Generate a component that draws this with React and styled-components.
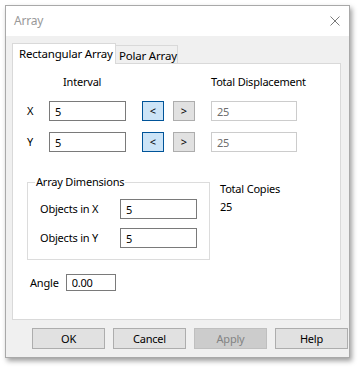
import React from "react";
import styled, { createGlobalStyle } from "styled-components";

const Global = createGlobalStyle`
  html, body { margin: 0; padding: 0; background: #ffffff; }
  body {
    font-family: "Noto Sans", sans-serif;
    font-size: 11px;
    letter-spacing: -0.2px;
    color: #000;
  }
  * { box-sizing: border-box; }
`;

const Page = styled.div`
  padding: 5px;
  width: 361px;
  height: 369px;
`;

const Window = styled.div`
  width: 345px;
  height: 353px;
  border: 1px solid #a9a9a9;
  background: #f0f0f0;
  box-shadow: 2px 3px 5px rgba(0, 0, 0, 0.38);
  display: flex;
  flex-direction: column;
`;

const TitleBar = styled.div`
  height: 30px;
  background: #ffffff;
  display: flex;
  align-items: center;
  justify-content: space-between;
  padding: 0 9px 0 8px;
`;

const Title = styled.span`
  color: #999999;
  font-size: 12px;
  line-height: 16px;
`;

const CloseIcon = styled.svg`
  width: 10px;
  height: 10px;
  display: block;
`;

const Body = styled.div`
  flex: 1;
  padding: 7px 8px 7px 6px;
  display: flex;
  flex-direction: column;
`;

const TabStrip = styled.div`
  display: flex;
  align-items: flex-end;
  height: 21px;
  position: relative;
  z-index: 1;
`;

const Tab = styled.div`
  width: ${(p) => p.$w}px;
  background: ${(p) => (p.$active ? "#ffffff" : "#f0f0f0")};
  border: 1px solid #d9d9d9;
  border-bottom: none;
  ${(p) => (p.$active ? "" : "border-left: none;")}
  height: ${(p) => (p.$active ? "21px" : "18px")};
  margin-bottom: ${(p) => (p.$active ? "0" : "1px")};
  padding: ${(p) => (p.$active ? "2px 0 0 6px" : "2px 0 0 3px")};
  line-height: 16px;
  font-size: 11.5px;
  white-space: nowrap;
`;

const Panel = styled.div`
  margin-top: -1px;
  height: 257px;
  border: 1px solid #d9d9d9;
  background: #ffffff;
  padding-top: 10px;
  display: flex;
  flex-direction: column;
`;

const IntervalGrid = styled.div`
  display: grid;
  grid-template-columns: 22px 77px 38px 31px 102px;
  row-gap: 11px;
  padding-left: 14px;
  align-items: center;
`;

const HeaderText = styled.div`
  line-height: 16px;
  padding-left: ${(p) => p.$indent || 0}px;
  white-space: nowrap;
  justify-self: ${(p) => (p.$end ? "end" : "start")};
  width: ${(p) => (p.$end ? "86px" : "auto")};
`;

const Label = styled.div`
  line-height: 16px;
  white-space: nowrap;
`;

const Field = styled.input`
  width: ${(p) => p.$w}px;
  height: ${(p) => p.$h || 20}px;
  border: 1px solid ${(p) => (p.disabled ? "#cccccc" : "#7a7a7a")};
  background: #ffffff;
  color: ${(p) => (p.disabled ? "#6d6d6d" : "#000000")};
  font: inherit;
  letter-spacing: inherit;
  padding: 0 0 0 5px;
  margin: 0;
  outline: none;
  justify-self: ${(p) => (p.$end ? "end" : "start")};
`;

const ArrowButton = styled.button`
  width: 22px;
  height: 20px;
  padding: 0;
  margin: 0;
  font: inherit;
  line-height: 16px;
  color: #000;
  background: ${(p) => (p.$focused ? "#cce4f7" : "#e1e1e1")};
  border: 1px solid ${(p) => (p.$focused ? "#005499" : "#adadad")};
  justify-self: end;
`;

const Section = styled.div`
  display: flex;
  align-items: flex-start;
  margin-top: 22px;
  padding-left: 14px;
  gap: 10px;
`;

const GroupBox = styled.fieldset`
  width: 183px;
  height: 86px;
  margin: 0;
  border: 1px solid #dcdcdc;
  padding: 9px 0 0 7px;
  display: flex;
  flex-direction: column;
  gap: 9px;
`;

const Legend = styled.legend`
  padding: 0 1px;
  line-height: 16px;
`;

const DimRow = styled.div`
  display: grid;
  grid-template-columns: 80px 77px;
  align-items: center;
  padding-left: 5px;
`;

const Copies = styled.div`
  margin-top: 7px;
  display: flex;
  flex-direction: column;
  gap: 2px;
  line-height: 16px;
`;

const AngleRow = styled.div`
  display: flex;
  align-items: center;
  margin-top: 14px;
  padding-left: 17px;
  gap: 7px;
`;

const ButtonRow = styled.div`
  display: grid;
  grid-template-columns: repeat(4, 73px);
  column-gap: 8px;
  padding-left: 20px;
  margin-top: 8px;
`;

const DialogButton = styled.button`
  height: 21px;
  margin: 0;
  padding: 0;
  font: inherit;
  letter-spacing: inherit;
  line-height: 16px;
  background: ${(p) => (p.disabled ? "#cccccc" : "#e1e1e1")};
  border: 1px solid ${(p) => (p.disabled ? "#bfbfbf" : "#adadad")};
  color: ${(p) => (p.disabled ? "#838383" : "#000000")};
`;

function IntervalRow({ axis }) {
  return (
    <>
      <Label>{axis}</Label>
      <Field $w={77} defaultValue="5" />
      <ArrowButton $focused>&lt;</ArrowButton>
      <ArrowButton>&gt;</ArrowButton>
      <Field $w={86} $end defaultValue="25" disabled />
    </>
  );
}

export default function App() {
  return (
    <Page>
      <Global />
      <Window>
        <TitleBar>
          <Title>Array</Title>
          <CloseIcon viewBox="0 0 10 10">
            <path d="M0.5 0.5 L9.5 9.5 M9.5 0.5 L0.5 9.5" stroke="#7a7a7a" strokeWidth="1" fill="none" />
          </CloseIcon>
        </TitleBar>
        <Body>
          <TabStrip>
            <Tab $active $w={104}>Rectangular Array</Tab>
            <Tab $w={62}>Polar Array</Tab>
          </TabStrip>
          <Panel>
            <IntervalGrid>
              <span />
              <HeaderText $indent={14}>Interval</HeaderText>
              <span />
              <span />
              <HeaderText $end>Total Displacement</HeaderText>
              <IntervalRow axis="X" />
              <IntervalRow axis="Y" />
            </IntervalGrid>

            <Section>
              <GroupBox>
                <Legend>Array Dimensions</Legend>
                <DimRow>
                  <Label>Objects in X</Label>
                  <Field $w={77} defaultValue="5" />
                </DimRow>
                <DimRow>
                  <Label>Objects in Y</Label>
                  <Field $w={77} defaultValue="5" />
                </DimRow>
              </GroupBox>
              <Copies>
                <span>Total Copies</span>
                <span>25</span>
              </Copies>
            </Section>

            <AngleRow>
              <Label>Angle</Label>
              <Field $w={50} $h={17} defaultValue="0.00" />
            </AngleRow>
          </Panel>
          <ButtonRow>
            <DialogButton>OK</DialogButton>
            <DialogButton>Cancel</DialogButton>
            <DialogButton disabled>Apply</DialogButton>
            <DialogButton>Help</DialogButton>
          </ButtonRow>
        </Body>
      </Window>
    </Page>
  );
}
